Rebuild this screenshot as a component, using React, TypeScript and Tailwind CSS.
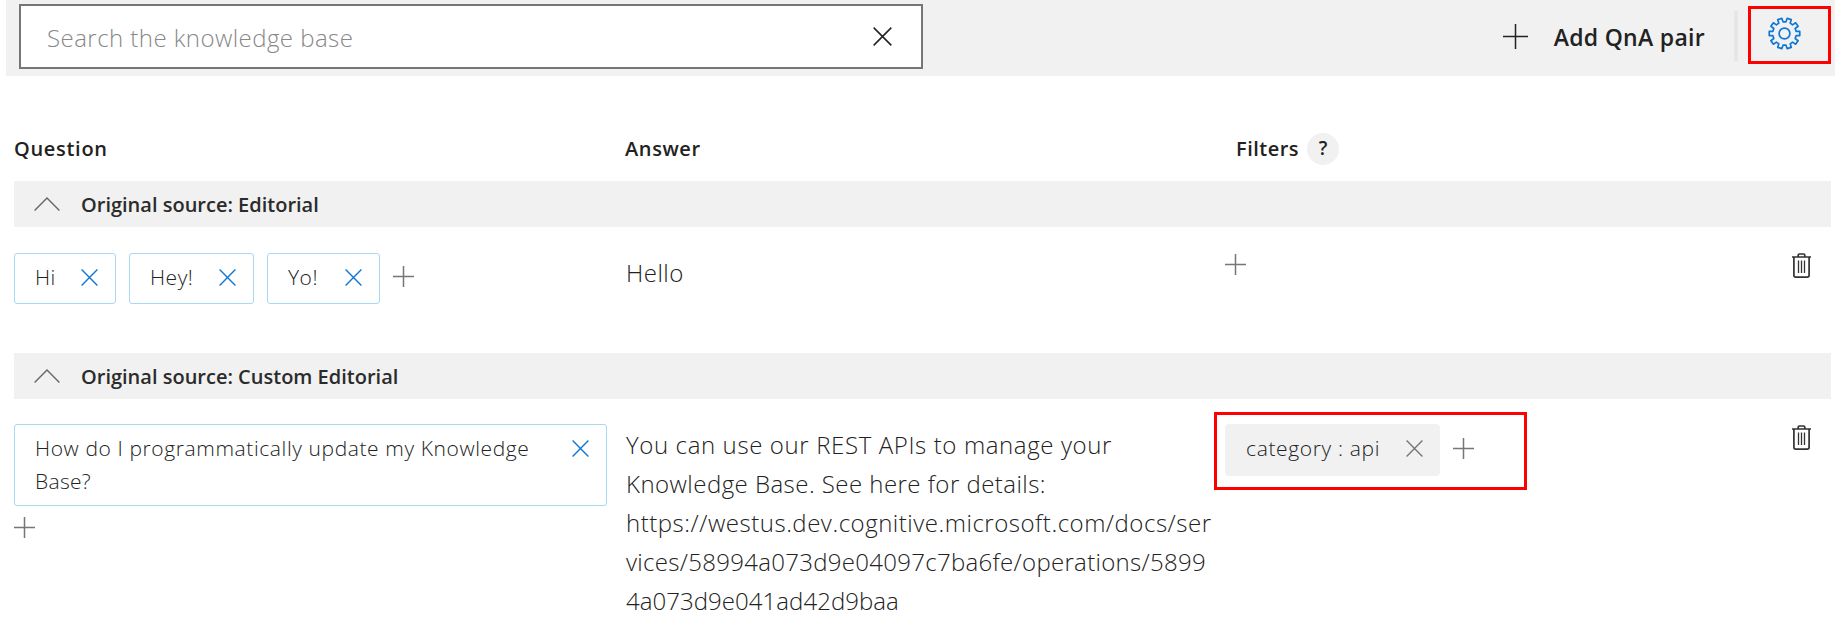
import React from "react";

function PlusIcon({ size = 21, className = "text-[#767676]" }: { size?: number; className?: string }) {
  return (
    <svg width={size} height={size} viewBox={`0 0 ${size} ${size}`} className={`block shrink-0 ${className}`} fill="none" stroke="currentColor" strokeWidth="1.5">
      <path d={`M0 ${size / 2}H${size}M${size / 2} 0V${size}`} />
    </svg>
  );
}

function CloseIcon({ size = 17, className = "text-[#0f78d4]" }: { size?: number; className?: string }) {
  return (
    <svg width={size} height={size} viewBox="0 0 17 17" className={`block shrink-0 ${className}`} fill="none" stroke="currentColor" strokeWidth="1.4">
      <path d="M0.6 0.6 16.4 16.4M16.4 0.6 0.6 16.4" />
    </svg>
  );
}

function ChevronIcon() {
  return (
    <svg width="26" height="14" viewBox="0 0 26 14" className="block shrink-0 text-[#666]" fill="none" stroke="currentColor" strokeWidth="1.4">
      <path d="M0.6 13.4 13 1 25.4 13.4" />
    </svg>
  );
}

function TrashIcon() {
  return (
    <svg width="19" height="25" viewBox="0 0 19 25" className="block shrink-0 text-[#333]" fill="none" stroke="currentColor" strokeWidth="1.7">
      <path d="M0 4H19M6.2 4V2.2Q6.2 1 7.4 1H11.6Q12.8 1 12.8 2.2V4M1.9 4V22.2Q1.9 24.1 3.8 24.1H15.2Q17.1 24.1 17.1 22.2V4" />
      <path d="M6.5 7.5V20M9.5 7.5V20M12.5 7.5V20" strokeWidth="1.3" />
    </svg>
  );
}

const TEETH = 10;

function gearPath() {
  const points: string[] = [];
  const profile: [number, number][] = [
    [-0.3, 11.8],
    [-0.22, 15.4],
    [0.22, 15.4],
    [0.3, 11.8],
  ];
  for (let i = 0; i < TEETH; i++) {
    const base = ((i + 0.5) / TEETH) * Math.PI * 2 - Math.PI / 2;
    for (const [offset, radius] of profile) {
      const a = base + (offset * Math.PI * 2) / TEETH;
      points.push(`${(16.5 + radius * Math.cos(a)).toFixed(2)} ${(16.5 + radius * Math.sin(a)).toFixed(2)}`);
    }
  }
  return `M${points.join("L")}Z`;
}

function GearIcon() {
  return (
    <svg width="33" height="33" viewBox="0 0 33 33" className="block shrink-0 text-[#0f78d4]" fill="none" stroke="currentColor" strokeWidth="1.7" strokeLinejoin="round">
      <path d={gearPath()} />
      <circle cx="16.5" cy="16.5" r="5.4" />
    </svg>
  );
}

function SourceBar({ children }: { children: string }) {
  return (
    <div className="flex h-[46px] items-center bg-[#f1f1f1] pl-5">
      <div className="pb-px">
        <ChevronIcon />
      </div>
      <span className="ml-[21px] pt-[2px] text-[20px] font-semibold text-[#2b2b2b]">{children}</span>
    </div>
  );
}

function Chip({ label, className }: { label: string; className: string }) {
  return (
    <div className={`flex h-[51px] items-center justify-between rounded-[3px] border-[1.5px] border-[#a9d8f2] pb-[3px] pl-[20px] pr-[17px] text-[21px] tracking-[0.5px] ${className}`}>
      <span className="pt-px font-light">{label}</span>
      <CloseIcon />
    </div>
  );
}

export default function App() {
  return (
    <div className="h-[643px] w-[1835px] overflow-hidden bg-white font-['Open_Sans',sans-serif] text-[#222] [&_span]:whitespace-nowrap">
      <header className="ml-[6px] flex h-[76px] items-start bg-[#f1f1f1] pr-1">
        <div className="ml-[13px] mt-1 flex h-[65px] w-[904px] items-center justify-between border-2 border-[#767676] bg-white pl-[26px] pr-[29px]">
          <span className="pt-[2px] text-[24px] font-light tracking-[0.45px] text-[#888]">Search the knowledge base</span>
          <CloseIcon size={19} className="text-[#222]" />
        </div>
        <div className="ml-auto flex h-[73px] items-center">
          <PlusIcon size={25} className="text-[#222]" />
          <span className="ml-[26px] pt-[2px] text-[23px] font-semibold tracking-[0.3px]">Add QnA pair</span>
        </div>
        <div className="ml-[29px] mt-[11px] h-[50px] w-1 bg-[#e6e6e6]" />
        <div className="ml-[10px] mt-[6px] flex h-[58px] w-[83px] border-[3px] border-[#ff0000] pl-[17px] pt-2">
          <GearIcon />
        </div>
      </header>

      <main className="ml-[14px] mr-1 mt-14">
        <div className="flex h-[33px] items-center text-[20px] font-semibold">
          <span className="w-[611px] tracking-[0.7px]">Question</span>
          <span className="w-[611px] tracking-[0.6px]">Answer</span>
          <span className="tracking-[0.5px]">Filters</span>
          <span className="ml-2 flex size-[32px] items-center justify-center rounded-full bg-[#f1f1f1] text-[19px]">?</span>
        </div>

        <section className="mt-4 h-[172px]">
          <SourceBar>Original source: Editorial</SourceBar>
          <div className="flex items-start pt-[26px]">
            <div className="flex w-[612px] items-start">
              <Chip label="Hi" className="w-[102px]" />
              <Chip label="Hey!" className="ml-[13px] w-[125px]" />
              <Chip label="Yo!" className="ml-[13px] w-[113px]" />
              <div className="ml-[13px] mt-[13px]">
                <PlusIcon />
              </div>
            </div>
            <div className="w-[599px] text-[24px] font-light leading-[39px] tracking-[0.5px]">Hello</div>
            <div className="mt-[1px]">
              <PlusIcon />
            </div>
            <div className="ml-auto mr-5">
              <TrashIcon />
            </div>
          </div>
        </section>

        <section>
          <SourceBar>Original source: Custom Editorial</SourceBar>
          <div className="flex items-start">
            <div className="w-[612px] pt-[25px]">
              <div className="flex h-[82px] w-[593px] items-start justify-between rounded-[3px] border-[1.5px] border-[#a9d8f2] pl-[20px] pr-[17px] pt-[7px]">
                <div className="text-[21px] font-light leading-[33px]">
                  <div className="tracking-[0.6px]">How do I programmatically update my Knowledge</div>
                  <div className="tracking-[0.3px]">Base?</div>
                </div>
                <div className="mt-2">
                  <CloseIcon />
                </div>
              </div>
              <div className="mt-[11px]">
                <PlusIcon />
              </div>
            </div>
            <div className="w-[588px] whitespace-nowrap pt-[26px] text-[24px] font-light leading-[39px]">
              <div className="tracking-[0.62px]">You can use our REST APIs to manage your</div>
              <div className="tracking-[0.46px]">Knowledge Base. See here for details:</div>
              <div className="tracking-[0.52px]">https://westus.dev.cognitive.microsoft.com/docs/ser</div>
              <div className="tracking-[0.3px]">vices/58994a073d9e04097c7ba6fe/operations/5899</div>
              <div className="tracking-[0.05px]">4a073d9e041ad42d9baa</div>
            </div>
            <div className="mt-[13px] flex h-[78px] w-[313px] items-start border-[3px] border-[#ff0000] pl-[8px] pt-[9px]">
              <div className="flex h-[52px] w-[215px] items-center justify-between rounded-[4px] bg-[#f1f1f1] pb-[3px] pl-[21px] pr-[17px] text-[21px] tracking-[0.65px]">
                <span className="pt-px font-light">category : api</span>
                <CloseIcon className="text-[#767676]" />
              </div>
              <div className="ml-[13px] mt-[14px]">
                <PlusIcon />
              </div>
            </div>
            <div className="ml-auto mr-5 mt-[26px]">
              <TrashIcon />
            </div>
          </div>
        </section>
      </main>
    </div>
  );
}
